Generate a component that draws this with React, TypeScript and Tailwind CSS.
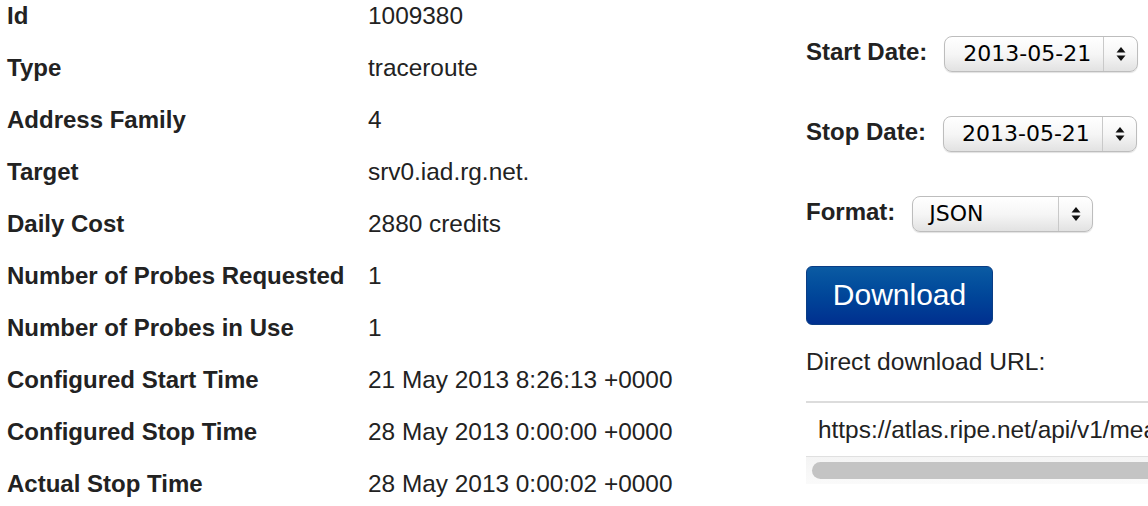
import React from 'react'

const rows: [string, string][] = [
  ['Id', '1009380'],
  ['Type', 'traceroute'],
  ['Address Family', '4'],
  ['Target', 'srv0.iad.rg.net.'],
  ['Daily Cost', '2880 credits'],
  ['Number of Probes Requested', '1'],
  ['Number of Probes in Use', '1'],
  ['Configured Start Time', '21 May 2013 8:26:13 +0000'],
  ['Configured Stop Time', '28 May 2013 0:00:00 +0000'],
  ['Actual Stop Time', '28 May 2013 0:00:02 +0000'],
]

function Arrows() {
  return (
    <svg width="10" height="16" viewBox="0 0 10 16" className="block">
      <path d="M5 1 L9.5 6.5 L0.5 6.5 Z" fill="#111" />
      <path d="M5 15 L9.5 9.5 L0.5 9.5 Z" fill="#111" />
    </svg>
  )
}

function FakeSelect({ value, width, padLeft }: { value: string; width: string; padLeft: string }) {
  return (
    <div
      className={`${width} h-[36px] flex items-stretch rounded-[8px] border border-[#bdbdbd] bg-gradient-to-b from-white via-[#f6f6f6] to-[#e2e2e2] shadow-[0_1px_1px_rgba(0,0,0,0.12)]`}
    >
      <div
        className={`flex-1 flex items-center ${padLeft} text-[22px] leading-[26px] text-black`}
        style={{ fontFamily: '"DejaVu Sans", sans-serif' }}
      >
        {value}
      </div>
      <div className="w-[34px] border-l border-[#c9c9c9] flex items-center justify-center">
        <Arrows />
      </div>
    </div>
  )
}

function DateRow({ label, children, first }: { label: string; children: React.ReactNode; first?: boolean }) {
  return (
    <div className={`flex items-center gap-[17px] h-[36px] ${first ? '' : 'mt-[44px]'}`}>
      <span className="text-[24px] leading-[28px] font-bold pb-[4px]">{label}</span>
      {children}
    </div>
  )
}

export default function App() {
  return (
    <div className="w-[1148px] h-[506px] overflow-hidden bg-white text-[#222] font-['Liberation_Sans',Arial,sans-serif] flex">
      <div className="w-[806px] shrink-0 pl-[7px] -mt-[10px]">
        {rows.map(([label, value]) => (
          <div key={label} className="flex leading-[52px]">
            <div className="w-[361px] shrink-0 font-bold text-[24px]">{label}</div>
            <div className="text-[24.4px]">{value}</div>
          </div>
        ))}
      </div>

      <div className="flex-1 min-w-0 pt-[36px] flex flex-col">
        <DateRow label="Start Date:" first>
          <FakeSelect value="2013-05-21" width="w-[194px]" padLeft="pl-[18px]" />
        </DateRow>
        <DateRow label="Stop Date:">
          <FakeSelect value="2013-05-21" width="w-[194px]" padLeft="pl-[18px]" />
        </DateRow>
        <DateRow label="Format:">
          <FakeSelect value="JSON" width="w-[181px]" padLeft="pl-[16px]" />
        </DateRow>

        <button className="mt-[34px] w-[187px] h-[59px] rounded-[6px] bg-gradient-to-b from-[#0b5ba3] to-[#002f8f] text-white text-[30px] leading-[34px] border border-[#0a3d85] flex items-center justify-center pb-[1px]">
          Download
        </button>

        <div className="mt-[24px] text-[24.6px] leading-[26px]">Direct download URL:</div>

        <div className="mt-[26px] border-t-2 border-[#dcdcdc] w-[400px]">
          <div className="h-[53px] pl-[12px] flex items-center text-[24.4px] leading-[28px] whitespace-nowrap">
            https://atlas.ripe.net/api/v1/mea
          </div>
          <div className="h-[28px] border-t border-[#e0e0e0] bg-gradient-to-b from-[#f4f4f4] to-[#fafafa] pl-[6px] pt-[5px]">
            <div className="h-[17px] rounded-full bg-[#c4c4c4]" />
          </div>
        </div>
      </div>
    </div>
  )
}
